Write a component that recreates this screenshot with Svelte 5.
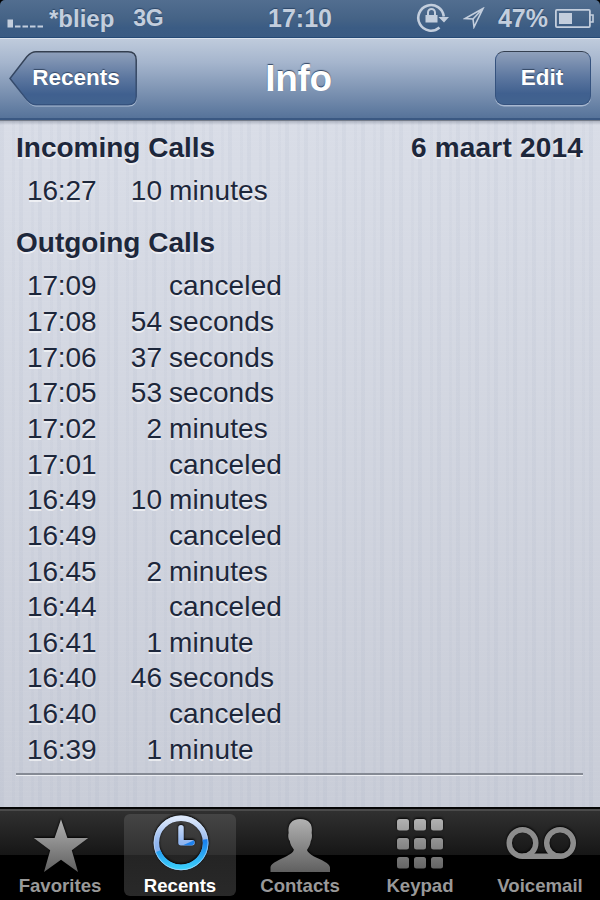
<script>
  const incoming = [{ time: '16:27', amount: '10', unit: 'minutes' }];

  const outgoing = [
    { time: '17:09', amount: '', unit: 'canceled' },
    { time: '17:08', amount: '54', unit: 'seconds' },
    { time: '17:06', amount: '37', unit: 'seconds' },
    { time: '17:05', amount: '53', unit: 'seconds' },
    { time: '17:02', amount: '2', unit: 'minutes' },
    { time: '17:01', amount: '', unit: 'canceled' },
    { time: '16:49', amount: '10', unit: 'minutes' },
    { time: '16:49', amount: '', unit: 'canceled' },
    { time: '16:45', amount: '2', unit: 'minutes' },
    { time: '16:44', amount: '', unit: 'canceled' },
    { time: '16:41', amount: '1', unit: 'minute' },
    { time: '16:40', amount: '46', unit: 'seconds' },
    { time: '16:40', amount: '', unit: 'canceled' },
    { time: '16:39', amount: '1', unit: 'minute' }
  ];

  const tabs = ['Favorites', 'Recents', 'Contacts', 'Keypad', 'Voicemail'];
  let activeTab = $state('Recents');
</script>

{#snippet callRows(calls)}
  {#each calls as call}
    <div class="call">
      <span class="time">{call.time}</span>
      <span class="amount">{call.amount}</span>
      <span class="unit">{call.unit}</span>
    </div>
  {/each}
{/snippet}

<div class="phone">
  <!-- Status bar -->
  <header class="status">
    <div class="status-left">
      <svg class="signal" width="37" height="9" viewBox="0 0 37 9">
        <path d="M0.5 0.5H6V8.500H0.5ZM8 6.500H13.500V8.500H8ZM15.500 6.500H21V8.500H15.500ZM23 6.500H28.500V8.500H23ZM30.500 6.500H36V8.500H30.500Z" />
      </svg>
      <span class="carrier">*bliep</span>
      <span class="network">3G</span>
    </div>
    <span class="clock">17:10</span>
    <div class="status-right">
      <svg class="lock" width="34" height="32" viewBox="0 0 34 32">
        <path class="line" d="M23.5 26.5A12.8 12.8 0 1 1 27.8 15.5" stroke-width="2.6" />
        <path d="M22.5 16H33L28 21.5ZM9.5 14H21.5V21.5H9.5Z" />
        <path class="line" d="M12 14.5V11.5A3.4 3.4 0 0 1 19 11.5V14.5" stroke-width="2" />
      </svg>
      <svg class="arrow" width="22" height="22" viewBox="0 0 22 22">
        <path class="line" d="M20 1.5L2 11.5L10 12L11 20Z M20 1.5L10 12" stroke-width="1.6" />
      </svg>
      <span class="percent">47%</span>
      <svg class="battery" width="40" height="20" viewBox="0 0 40 20">
        <rect class="line" x="0.9" y="0.9" width="34" height="17.2" rx="1" stroke-width="1.8" />
        <rect x="4" y="4" width="13" height="11" />
        <path class="line" d="M35 6H38V13H35" stroke-width="1.6" />
      </svg>
    </div>
  </header>

  <!-- Navigation bar -->
  <nav class="navbar">
    <button class="back">
      <svg width="130" height="58" viewBox="0 0 130 58">
        <defs>
          <linearGradient id="button-fill" x1="0" y1="0" x2="0" y2="1">
            <stop offset="0" stop-color="#8fa0bb" />
            <stop offset="0.5" stop-color="#5b769f" />
            <stop offset="0.8" stop-color="#40608f" />
            <stop offset="1" stop-color="#42638f" />
          </linearGradient>
          <linearGradient id="button-edge" x1="0" y1="0" x2="0" y2="1">
            <stop offset="0" stop-color="#343f50" />
            <stop offset="1" stop-color="#35527e" />
          </linearGradient>
        </defs>
        <path class="back-light" d="M1.5 28.5L18 7.5Q23 2 27 2H119.5Q128 2 128 10V46Q128 55.5 119.5 55.5H27Q23 55.5 18 50.5Z" />
        <path class="back-shape" d="M1 27.5L18 5.5Q22.5 0.8 27 0.8H119Q127.2 0.8 127.2 9V45.5Q127.2 53.8 119 53.8H27Q22.5 53.8 18 49Z" />
      </svg>
      <span>Recents</span>
    </button>
    <h1>Info</h1>
    <button class="edit">Edit</button>
  </nav>

  <main>
    <div class="heading">
      <h2>Incoming Calls</h2>
      <h2 class="date">6 maart 2014</h2>
    </div>
    {@render callRows(incoming)}
    <div class="heading second">
      <h2>Outgoing Calls</h2>
    </div>
    {@render callRows(outgoing)}
    <div class="rule"></div>
  </main>

  <!-- Tab bar -->
  <footer class="tabs">
    {#each tabs as tab}
      <button class="tab" class:active={tab === activeTab} onclick={() => (activeTab = tab)}>
        <svg width="80" height="64" viewBox="0 0 80 64">
          <defs>
            <linearGradient id="grey" gradientUnits="userSpaceOnUse" x1="0" y1="7" x2="0" y2="60">
              <stop offset="0" stop-color="#b0b0b0" />
              <stop offset="1" stop-color="#5e5e5e" />
            </linearGradient>
            <linearGradient id="ring-top" gradientUnits="userSpaceOnUse" x1="0" y1="4" x2="0" y2="52">
              <stop offset="0" stop-color="#e4edfb" />
              <stop offset="0.55" stop-color="#93b7f0" />
              <stop offset="1" stop-color="#6fa5ee" />
            </linearGradient>
            <linearGradient id="ring-low" gradientUnits="userSpaceOnUse" x1="0" y1="27" x2="0" y2="57">
              <stop offset="0" stop-color="#177bed" />
              <stop offset="1" stop-color="#3bd0fb" />
            </linearGradient>
          </defs>
          {#if tab === 'Favorites'}
            <path fill="url(#grey)" d="M41 6.3L47.4 25H68.2L51.8 37.2L58 59L41 46.8L24 59L30.2 37.2L13.8 25H34.6Z" />
          {:else if tab === 'Recents'}
            <g transform="translate(0 -1.2)">
              <circle class="ring" cx="41" cy="31" r="24.6" stroke="url(#ring-top)" />
              <path class="ring" d="M65.4 27.5A24.6 24.6 0 0 1 18 39.5" stroke="url(#ring-low)" />
              <circle cx="41" cy="31" r="27" fill="none" stroke="#cfe4fc" stroke-opacity="0.55" />
              <path class="hand" d="M41 16V31H52" stroke="url(#ring-top)" />
              <path d="M43 33.5L54 28.5Q55.5 32 52 33.5Z" fill="#1f83ef" />
            </g>
          {:else if tab === 'Contacts'}
            <path fill="url(#grey)" d="M10.5 59V54C11 49.5 21 46.5 27 43C31.5 40.5 33.5 39 33.8 36.5C32 34 30 31 29.8 28C28 26 28 22 28.6 20C27.5 11 32 6 40 6C49 6 53 11 51.7 20C52.3 22.5 52 26 50.8 28C50.3 31.5 49 34 47 37C47.5 39 50 41 54 43.5C61 47 70 50 70 54.5V59Z" />
          {:else if tab === 'Keypad'}
            {#each [6, 25, 44] as y}
              {#each [17, 34, 51] as x}
                <rect {x} {y} width="12" height="11.5" rx="2.5" fill="url(#grey)" />
              {/each}
            {/each}
          {:else}
            <path class="reels" d="M22.5 43.3H60.5" />
            <circle class="reels" cx="22.5" cy="30" r="13.3" />
            <circle class="reels" cx="60" cy="30" r="13.3" />
          {/if}
        </svg>
        <span>{tab}</span>
      </button>
    {/each}
  </footer>
</div>

<style>
  :global(body) {
    background: #000;
  }

  .phone {
    display: flex;
    flex-direction: column;
    width: 600px;
    height: 900px;
    overflow: hidden;
    font-family: "Liberation Sans", Arial, sans-serif;
    background: #000;
  }

  button {
    padding: 0;
    border: 0;
    background: none;
    font: inherit;
  }

  h1, h2 {
    margin: 0;
  }

  /* Status bar */
  .status {
    display: grid;
    grid-template-columns: 1fr auto 1fr;
    align-items: center;
    box-sizing: border-box;
    height: 38px;
    padding: 0 5px 0 7px;
    border-bottom: 1px solid #254a76;
    border-radius: 5px 5px 0 0;
    background: linear-gradient(#526e90, #456386 50%, #3b5c84 75%, #3a5b83);
    color: #c3cedd;
    fill: #c3cedd;
    font-weight: bold;
    text-shadow: 0 -1px 1px #2d4869;
  }

  .status-left, .status-right {
    display: flex;
    align-items: center;
  }

  .status-right {
    justify-content: flex-end;
  }

  .line {
    fill: none;
    stroke: #c3cedd;
  }

  .signal {
    margin-top: 9px;
  }

  .carrier {
    margin-left: 5px;
    font-size: 24px;
  }

  .network {
    margin-left: 19px;
    font-size: 23px;
    letter-spacing: -0.5px;
  }

  .clock {
    padding-right: 2px;
    font-size: 25px;
  }

  .lock {
    margin: 0 1px 3px 0;
  }

  .arrow {
    margin: 0 13px 2px 12px;
  }

  .percent {
    font-size: 25px;
  }

  .battery {
    margin-left: 7px;
  }

  /* Navigation bar */
  .navbar {
    display: grid;
    grid-template-columns: 130px 1fr 130px;
    align-items: start;
    box-sizing: border-box;
    height: 82px;
    padding: 12px 9px 0 9px;
    border-top: 1px solid #dbe3ed;
    border-bottom: 2px solid #3a5882;
    background: linear-gradient(#bfcbdc, #a5b5cd 30%, #7e94b3 65%, #56739a);
    color: #fff;
    font-weight: bold;
    text-shadow: 0 -1.5px 1px #344764;
  }

  .back {
    display: grid;
    height: 58px;
    color: #fff;
    font-size: 22.5px;
    font-weight: bold;
    text-shadow: inherit;
  }

  .back svg, .back span {
    grid-area: 1 / 1;
  }

  .back span {
    padding-left: 4px;
    line-height: 53px;
  }

  .back-shape {
    fill: url(#button-fill);
    stroke: url(#button-edge);
    stroke-width: 1.5;
  }

  .back-light {
    fill: #b0c0d6;
  }

  h1 {
    padding-right: 3px;
    font-size: 37px;
    letter-spacing: -0.3px;
    line-height: 55px;
    text-align: center;
  }

  .edit {
    box-sizing: border-box;
    justify-self: end;
    width: 96px;
    height: 54px;
    padding-right: 2px;
    border: 1.5px solid #35527e;
    border-top-color: #343f50;
    border-radius: 9px;
    background: linear-gradient(#8fa0bb, #5b769f 50%, #40608f 80%, #42638f);
    box-shadow: 0 1.5px 0 #a8b8d0;
    color: #fff;
    font-size: 22.5px;
    font-weight: bold;
    text-shadow: inherit;
  }

  /* Call list */
  main {
    box-sizing: border-box;
    height: 687px;
    padding: 11px 17px 0 16px;
    border-top: 1px solid #747b88;
    background:
      linear-gradient(rgba(70, 80, 100, 0.3), transparent 4px),
      repeating-linear-gradient(90deg, rgba(120, 135, 165, 0.06) 0 4px, transparent 4px 12px, rgba(120, 135, 165, 0.04) 12px 15px, transparent 15px 19px),
      repeating-linear-gradient(rgba(255, 255, 255, 0.03) 0 1px, transparent 1px 5px),
      linear-gradient(#d9dde7, #c9cdd8);
    color: #1d273b;
    font-size: 28px;
    text-shadow: 0 1.5px 0 rgba(255, 255, 255, 0.6);
  }

  .heading {
    display: flex;
    justify-content: space-between;
    margin-bottom: 9.4px;
  }

  .heading.second {
    margin-top: 18px;
  }

  h2 {
    font-size: 28px;
    line-height: 32px;
  }

  .date {
    letter-spacing: 0.2px;
  }

  .call {
    display: grid;
    grid-template-columns: 81px 54px 1fr;
    height: 35.65px;
    padding-left: 11px;
    line-height: 35.65px;
  }

  .time {
    letter-spacing: -0.15px;
  }

  .amount {
    text-align: right;
  }

  .unit {
    padding-left: 7px;
    letter-spacing: 0.12px;
  }

  .rule {
    height: 2px;
    margin-top: 6px;
    background: #858a94;
    box-shadow: 0 1px 0 #eceef3;
  }

  /* Tab bar */
  .tabs {
    display: grid;
    grid-template-columns: repeat(5, 112px);
    column-gap: 8px;
    box-sizing: border-box;
    height: 93px;
    padding: 5px 4px 0;
    border-top: 2px solid #050505;
    background: linear-gradient(#4b4b4b 0 1.5px, #303030 2px, #161616 46px, #000 46px);
  }

  .tab {
    display: flex;
    flex-direction: column;
    align-items: center;
    height: 82px;
    border-radius: 6px;
    color: #999;
    font-size: 18.6px;
    font-weight: bold;
  }

  .tab svg {
    flex: none;
    margin-top: -1px;
    filter: drop-shadow(0 -1px 1px #000);
  }

  .tab span {
    line-height: 18px;
  }

  .tab.active {
    background: linear-gradient(#454545, #303030 41px, #242424 41px, #292929);
    color: #fff;
  }

  .ring {
    fill: none;
    stroke-width: 5.5;
  }

  .hand {
    fill: none;
    stroke-width: 5.5;
    stroke-linecap: round;
    stroke-linejoin: round;
  }

  .reels {
    fill: none;
    stroke: #8c8c8c;
    stroke-width: 5.5;
  }
</style>
